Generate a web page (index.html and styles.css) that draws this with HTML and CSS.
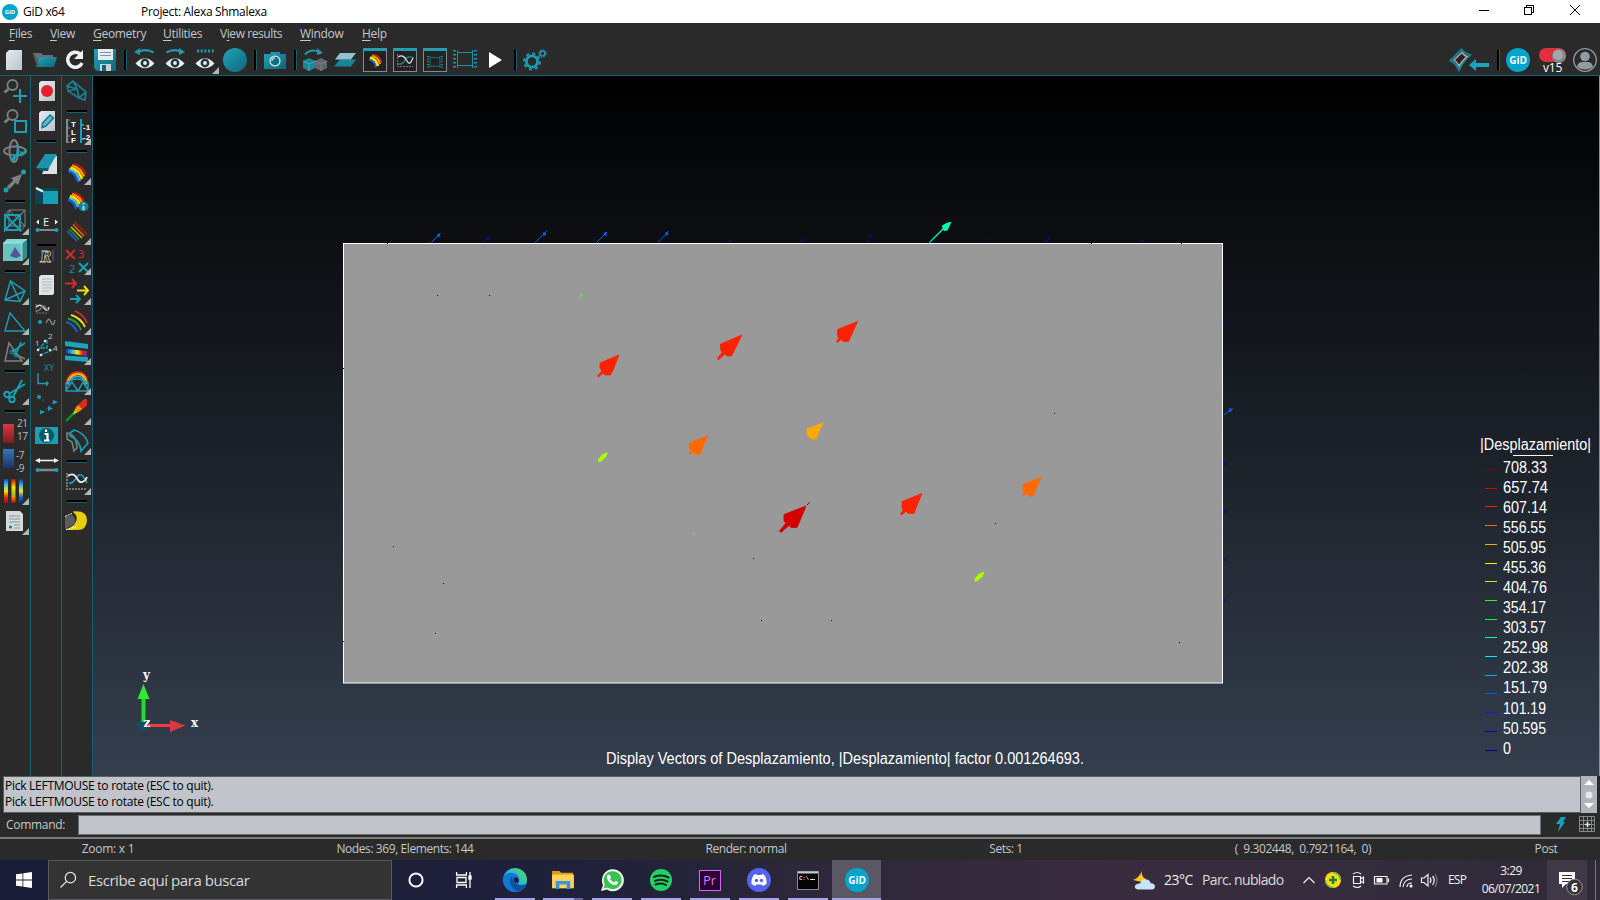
FILE: index.html
```html
<!DOCTYPE html>
<html lang="es">
<head>
<meta charset="utf-8">
<title>GiD x64</title>
<link rel="stylesheet" href="styles.css">
</head>
<body>
<svg class="defs" width="0" height="0">
  <defs>
    <linearGradient id="hr"><stop offset="0" stop-color="#1536c8"/><stop offset="0.3" stop-color="#22c8e8"/><stop offset="0.55" stop-color="#ffe600"/><stop offset="0.8" stop-color="#e01818"/><stop offset="1" stop-color="#6a30d0"/></linearGradient>
    <linearGradient id="vr" x1="0" y1="0" x2="0" y2="1"><stop offset="0" stop-color="#c01010"/><stop offset="0.35" stop-color="#ffe600"/><stop offset="0.55" stop-color="#a0d820"/><stop offset="0.75" stop-color="#ff8a00"/><stop offset="1" stop-color="#b01010"/></linearGradient>
    <linearGradient id="vl" x1="0" y1="0" x2="0" y2="1"><stop offset="0" stop-color="#1848c8"/><stop offset="0.25" stop-color="#40c8e8"/><stop offset="0.5" stop-color="#ffe600"/><stop offset="0.75" stop-color="#e83010"/><stop offset="1" stop-color="#a01010"/></linearGradient>
    <linearGradient id="vb" x1="0" y1="0" x2="0" y2="1"><stop offset="0" stop-color="#1030a0"/><stop offset="0.3" stop-color="#40c8e8"/><stop offset="0.5" stop-color="#ffe600"/><stop offset="0.75" stop-color="#2860d0"/><stop offset="1" stop-color="#102880"/></linearGradient>
    <linearGradient id="tl" x1="0" y1="0" x2="1" y2="1"><stop offset="0" stop-color="#22a5bb"/><stop offset="1" stop-color="#0d6478"/></linearGradient>
    <linearGradient id="pg" x1="0" y1="0" x2="1" y2="1"><stop offset="0" stop-color="#e4ecf0"/><stop offset="1" stop-color="#b9c5cc"/></linearGradient>
    <linearGradient id="rd" x1="0" y1="0" x2="0" y2="1"><stop offset="0" stop-color="#d83a44"/><stop offset="1" stop-color="#7c1c24"/></linearGradient>
    <linearGradient id="bl" x1="0" y1="0" x2="0" y2="1"><stop offset="0" stop-color="#3a74c0"/><stop offset="1" stop-color="#1a3460"/></linearGradient>
    <linearGradient id="eg" x1="0" y1="1" x2="1" y2="0"><stop offset="0" stop-color="#0c6fd0"/><stop offset="0.5" stop-color="#24b4dc"/><stop offset="1" stop-color="#62e05a"/></linearGradient>
    <g id="eye"><path d="M2.500 15.500Q12 5 21.500 15.500Q12 25 2.500 15.500Z" fill="#e8f0f2"/><circle cx="12" cy="15" r="4.400" fill="#20363c"/><circle cx="12" cy="15" r="1.900" fill="#e8f0f2"/></g>
    <g id="frame"><rect x=".5" y=".5" width="23" height="23" fill="#222" stroke="#85898b"/><rect x="0" y="0" width="24" height="3" fill="#279db2"/></g>
    <g id="film"><path d="M5 5.500H19M5 18.500H19M4.500 3V21M19.500 3V21" stroke="#1a94aa" fill="none"/><path d="M1.500 3V22M22.500 3V22" stroke="#1a94aa" stroke-width="3" stroke-dasharray="1.500 2.500" fill="none"/></g>
    <g id="mag"><circle cx="9.500" cy="6" r="5" fill="none" stroke="#7c8182" stroke-width="1.800"/><path d="M5.500 10L1.500 13.500" stroke="#7c8182" stroke-width="2.800"/></g>
  </defs>
</svg>

<header class="titlebar">
  <span class="logo small">GiD</span>
  <span class="app-name">GiD x64</span>
  <span class="project">Project: Alexa Shmalexa</span>
  <svg class="winbtns" viewBox="0 0 120 23" fill="none" stroke="#000" shape-rendering="crispEdges"><path d="M4 10.500H14"/><path d="M49.500 7.500H56.500V14.500H49.500ZM51.500 7V5.500H58.500V12.500H57"/><path d="M95 5L105 15M105 5L95 15" shape-rendering="auto"/></svg>
</header>

<nav class="menubar"><span><u>F</u>iles</span><span><u>V</u>iew</span><span><u>G</u>eometry</span><span><u>U</u>tilities</span><span>V<u>i</u>ew results</span><span><u>W</u>indow</span><span><u>H</u>elp</span></nav>

<div class="toolbar">
  <svg class="ic" viewBox="0 0 24 24"><path d="M6 2H19V22H3V5Z" fill="url(#pg)"/></svg>
  <svg class="ic" viewBox="0 0 24 24"><path d="M0 5H8L10 7H20V10H5L4 17Z" fill="#6a6e70"/><path d="M6 9H24L21 19H3Z" fill="url(#tl)"/><path d="M1 6L5 18" stroke="#55595b" stroke-width="2"/></svg>
  <svg class="ic" viewBox="0 0 24 24"><path d="M17 6A7.500 7.500 0 1 0 19 15" fill="none" stroke="#eef2f3" stroke-width="3.600"/><path d="M20 2V11H11Z" fill="#eef2f3"/></svg>
  <svg class="ic" viewBox="0 0 24 24"><path d="M1 1H23V23H4L1 20Z" fill="url(#tl)"/><rect x="5" y="1" width="15" height="11" fill="#e4ecf0"/><path d="M7 4.500H18M7 7.500H18" stroke="#85959c"/><rect x="7" y="16" width="11" height="7" fill="#c8d2d6"/><rect x="9" y="17" width="4" height="6" fill="#11667a"/></svg>
  <i class="sep"></i>
  <svg class="ic" viewBox="0 0 24 24"><use href="#eye"/><path d="M5 4Q13 0 20.500 4.500" fill="none" stroke="#1b9bb1" stroke-width="2.200"/><path d="M7 0V7L1 4Z" fill="#1b9bb1"/></svg>
  <svg class="ic" viewBox="0 0 24 24"><use href="#eye"/><path d="M3.500 4.500Q11 0 19 4" fill="none" stroke="#1b9bb1" stroke-width="2.200"/><path d="M16 0V7L22 4Z" fill="#1b9bb1"/></svg>
  <span class="ic more"><svg viewBox="0 0 24 24"><use href="#eye"/><path d="M4 3H21" stroke="#1b9bb1" stroke-width="3" stroke-dasharray="2 1.700"/></svg></span>
  <svg class="ic" viewBox="0 0 24 24"><circle cx="12" cy="12" r="12" fill="url(#tl)"/></svg>
  <i class="sep"></i>
  <svg class="ic" viewBox="0 0 24 24"><path d="M1 6H7L8 4H17V6H23V21H1Z" fill="url(#tl)"/><circle cx="12" cy="13" r="5.600" fill="#d5e3e8"/><circle cx="12" cy="13" r="4.300" fill="#176b80"/><path d="M9 13A3 3 0 0 1 12 10" stroke="#a9d6e0" stroke-width="1.500" fill="none"/></svg>
  <i class="sep"></i>
  <svg class="ic" viewBox="0 0 24 24"><path d="M0 13L6 10L12 13V20L6 23L0 20Z" fill="#1c8599"/><path d="M0 13L6 16L12 13M6 16V23" stroke="#3fb0c2" fill="none"/><path d="M12 13L18 10L24 13V20L18 23L12 20Z" fill="#63686a"/><path d="M12 13L18 16L24 13M18 16V23" stroke="#7b8082" fill="none"/><path d="M2 6.500Q8 0 16 4" fill="none" stroke="#1b9bb1" stroke-width="2"/><path d="M14 0L20 5L14 7Z" fill="#1b9bb1"/></svg>
  <svg class="ic" viewBox="0 0 24 24"><path d="M7 11.500H23L18 18.500H1Z" fill="#16869b"/><path d="M7 5H23L18 11.500H2Z" fill="#8fc3cf"/></svg>
  <svg class="ic" viewBox="0 0 24 24"><use href="#frame"/><path d="M6 11.500Q12 12.500 13 19.500" stroke="#1767d8" stroke-width="2" fill="none"/><path d="M7 9.500Q13.500 11 15 18" stroke="#ffe600" stroke-width="2.600" fill="none"/><path d="M9 7.500Q15.500 9.500 17 16" stroke="#ff9a00" stroke-width="2" fill="none"/><path d="M10.500 6.500Q17 8.500 18.500 14.500" stroke="#e02a18" stroke-width="1.500" fill="none"/></svg>
  <svg class="ic" viewBox="0 0 24 24"><use href="#frame"/><path d="M4.500 6V18.500H20" stroke="#777" stroke-dasharray="2 1" fill="none"/><path d="M5 16Q10 17 12 12T21 10" stroke="#188a9e" fill="none" stroke-width="1.300"/><path d="M5 9C9 6 12 9 14 13S18 15 20 10" stroke="#dde" fill="none" stroke-width="1.200"/></svg>
  <svg class="ic" viewBox="0 0 24 24"><use href="#frame"/><use href="#film" transform="translate(4 6) scale(.66)"/></svg>
  <svg class="ic" viewBox="0 0 24 24"><use href="#film" transform="translate(0 -1)"/></svg>
  <svg class="ic" viewBox="0 0 24 24"><path d="M6 4L19 12L6 20Z" fill="#fff"/></svg>
  <i class="sep"></i>
  <svg class="ic" viewBox="0 0 24 24" fill="none" stroke="#1a9cb2"><circle cx="9" cy="13.500" r="5.600" stroke-width="2.800"/><circle cx="9" cy="13.500" r="8" stroke-width="2" stroke-dasharray="3.140 3.140"/><circle cx="19.500" cy="5.500" r="2.500" stroke-width="1.600"/><circle cx="19.500" cy="5.500" r="3.800" stroke-width="1" stroke-dasharray="1.500 1.500"/></svg>
  <div class="toolbar-right">
    <svg class="ic wide" viewBox="0 0 41 24"><path d="M1.500 12.500L12.500 1.500Q15 5 21 7Q14 13 10 22Q7 15 1.500 12.500Z" fill="#2a2a2a" stroke="#148296" stroke-width="2"/><path d="M5 12L13 4.500Q15 7.500 18 8.500Q13 13 10 18Q8 14 5 12Z" fill="#242424" stroke="#b9a9a5" stroke-width="1.500"/><path d="M20 17L27 11V15H40V19H27V23Z" fill="#18a5c0"/></svg>
    <i class="sep"></i>
    <span class="logo">GiD</span>
    <span class="version"><svg viewBox="0 0 28 16"><rect x="0" y="0" width="27" height="14" rx="7" fill="#e22f3c"/><circle cx="20" cy="8" r="7" fill="#7f878b"/><circle cx="19" cy="7" r="5" fill="#a1a9ad"/></svg><b>v15</b></span>
    <svg class="ic user" viewBox="0 0 24 24"><circle cx="12" cy="12" r="11.300" fill="none" stroke="#929ba1" stroke-width="1.300"/><circle cx="12" cy="8.500" r="4.800" fill="#929ba1"/><path d="M4 19Q5 14 9 14H15Q19 14 20 19Q16 21.500 12 21.500T4 19Z" fill="#929ba1"/></svg>
  </div>
</div>

<main class="work">
  <aside class="rail">
    <svg class="ic" viewBox="0 0 24 24"><use href="#mag"/><path d="M17 10V24M10 17H24" stroke="#18a0b6" stroke-width="2"/></svg>
    <svg class="ic" viewBox="0 0 24 24"><use href="#mag"/><rect x="12" y="12" width="11" height="11" fill="none" stroke="#18a0b6" stroke-width="2"/></svg>
    <svg class="ic" viewBox="0 0 24 24" fill="none" stroke-width="1.900"><ellipse cx="11" cy="12" rx="4.500" ry="11" stroke="#7c8182"/><ellipse cx="12" cy="12" rx="11" ry="4.500" stroke="#7c8182"/><path d="M14 6Q16 14 11 21M10 16Q18 17 22 12" stroke="#18a0b6"/><path d="M7 20L12 16V23ZM17 12L23 14L18 18Z" fill="#18a0b6"/></svg>
    <svg class="ic" viewBox="0 0 24 24"><path d="M5 19L15 9" stroke="#7c8182" stroke-width="3.500"/><path d="M19 5L8 9L15 16Z" fill="#7c8182"/><circle cx="3" cy="21" r="2.500" fill="#18a0b6"/><circle cx="20.500" cy="3" r="2.500" fill="#18a0b6"/></svg>
    <i class="hsep"></i>
    <span class="ic more"><svg viewBox="0 0 24 24" fill="none"><path d="M6 1H22V17H6ZM6 1L22 17M22 1L6 17M1 23L6 17M17 23L22 17M1 7L6 1M17 7L22 1" stroke="#7c8182"/><path d="M2 6H17V21H2ZM2 6L17 21M17 6L2 21" stroke="#18a0b6" stroke-width="1.900"/></svg></span>
    <span class="ic more"><svg viewBox="0 0 24 24"><path d="M0 4L4 0H24V18L19 22H0Z" fill="#7fdcd2"/><path d="M0 4H19V22H0Z" fill="#67c4be"/><path d="M19 4L24 0V18L19 22Z" fill="#37888b"/><path d="M12 8L18 17L13 19L7 17Z" fill="#53549a"/><path d="M0 4H19V22M19 4L24 0" stroke="#b8f4ee" fill="none" stroke-width=".7"/></svg></span>
    <i class="hsep"></i>
    <span class="ic more"><svg viewBox="0 0 24 24" fill="none" stroke="#18a0b6" stroke-width="1.500"><path d="M7.500 2L2 21L17 22.500L22 12ZM7.500 2L17 22.500M2 21L22 12"/></svg></span>
    <span class="ic more"><svg viewBox="0 0 24 24" fill="none" stroke="#18a0b6" stroke-width="1.400"><path d="M7 4L2 22H22Z"/></svg></span>
    <span class="ic more"><svg viewBox="0 0 24 24" fill="none"><path d="M6 4L2 22H19ZM12 15L22 20" stroke="#7c8182" stroke-width="1.500"/><path d="M9 13L22 4M13 15L18 3" stroke="#18a0b6" stroke-width="1.600"/><circle cx="9" cy="13" r="2" stroke="#18a0b6"/><circle cx="13" cy="16" r="2" stroke="#18a0b6"/></svg></span>
    <i class="hsep"></i>
    <span class="ic more"><svg viewBox="0 0 24 24" fill="none" stroke="#18a0b6" stroke-width="1.900"><path d="M6 15L22 5M10 18L19 1"/><circle cx="4" cy="15.500" r="2.700"/><circle cx="9" cy="20.500" r="2.700"/></svg></span>
    <i class="hsep"></i>
    <svg class="ic" viewBox="0 0 24 24"><rect x="0" y="5" width="11" height="19" fill="url(#rd)"/><text class="num" x="14" y="8">21</text><text class="num" x="14" y="21">17</text></svg>
    <svg class="ic" viewBox="0 0 24 24"><rect x="0" y="0" width="11" height="19" fill="url(#bl)"/><text class="num" x="13" y="10">-7</text><text class="num" x="13" y="23">-9</text></svg>
    <span class="ic more"><svg viewBox="0 0 24 24"><rect x="1" y="0" width="4" height="24" fill="url(#vl)"/><rect x="8.500" y="0" width="4" height="24" fill="url(#vr)"/><rect x="16" y="0" width="4" height="24" fill="url(#vb)"/></svg></span>
    <span class="ic more"><svg viewBox="0 0 24 24"><path d="M3 2H17L20 5V22H3Z" fill="#d3dadd"/><path d="M6 7H17M6 10H17M6 13H17M11 16H17M11 19H17" stroke="#8a9498"/><circle cx="7.500" cy="18" r="1.600" fill="#0b7c92"/></svg></span>
  </aside>
  <aside class="rail mid">
    <svg class="ic" viewBox="0 0 24 24"><path d="M6 2H20V22H4V4Z" fill="url(#pg)"/><circle cx="12" cy="12" r="6" fill="#e2202f"/></svg>
    <svg class="ic" viewBox="0 0 24 24"><path d="M6 2H20V22H4V4Z" fill="url(#pg)"/><path d="M7.500 14L15 6L18.500 9L11 17L7 18.500Z" fill="#5fb8d0" stroke="#14798c" stroke-width="1.500"/></svg>
    <i class="hsep"></i>
    <svg class="ic book" viewBox="0 0 24 24"><path d="M15 4H22V22H7Z" fill="#d9e1e4"/><path d="M10 2H22L14 16H1Z" fill="#1b94a9"/><path d="M14 16H1L7 19H13Z" fill="#0e5d6d"/></svg>
    <svg class="ic" viewBox="0 0 24 24"><path d="M0 6L9 10V22H0Z" fill="#0c4650"/><path d="M8 9H23V22H8Z" fill="#15a0b7"/><path d="M0 6H23V9H8Z" fill="#0c4650"/><path d="M1 6L8 9.500" stroke="#f1f6f7" stroke-width="2.200"/></svg>
    <svg class="ic" viewBox="0 0 24 24"><path d="M4 7.500V12.500L1 10ZM20 7.500V12.500L23 10Z" fill="#eef2f3"/><text x="8" y="14" class="lt">E</text><path d="M2 18H22" stroke="#84898b" stroke-width="2"/><circle cx="2.500" cy="18" r="2" fill="#18a0b6"/><circle cx="21.500" cy="18" r="2" fill="#18a0b6"/></svg>
    <i class="hsep dark"></i>
    <svg class="ic renum" viewBox="0 0 24 20"><text x="5" y="15" class="rr">R</text><path d="M7 3V14M18 3V14" stroke="#3b6c9c"/></svg>
    <svg class="ic" viewBox="0 0 24 24"><path d="M6 2H19V21L17 22H4V4Z" fill="#dfe5e7"/><path d="M7 6H17M7 9H17M7 12H17M7 15H17M7 18H14" stroke="#aeb6ba"/></svg>
    <svg class="ic" viewBox="0 0 24 24" fill="none"><path d="M1 1V10H13" stroke="#777" stroke-dasharray="2 1"/><path d="M1 4Q5 0 9 5T14 4" stroke="#cfd5d8" stroke-width="1.500"/><path d="M1 8Q5 8 7 4T13 8" stroke="#777" stroke-width="1.500"/><circle cx="5" cy="19" r="2" fill="#18a0b6"/><path d="M11 20Q14 13 16 19T20 17" stroke="#7c8182" stroke-width="1.500"/></svg>
    <svg class="ic" viewBox="0 0 24 24"><path d="M5 22L18 17M3 17L12 7M12 7V15H5" stroke="#18a0b6" stroke-width="1.300" stroke-dasharray="4 1" fill="none"/><text class="tn" x="13" y="6">2</text><text class="tn" x="0" y="13">1</text><text class="tn" x="18" y="18">4</text><g fill="#dde3e5"><circle cx="3" cy="17" r="1.300"/><circle cx="10" cy="8" r="1.300"/><circle cx="15" cy="17" r="1.300"/><circle cx="6" cy="22" r="1.300"/></g></svg>
    <svg class="ic" viewBox="0 0 24 24"><path d="M3 10V20.500H11" fill="none" stroke="#18a0b6" stroke-width="1.400"/><path d="M11 17.500L14 20.500L11 23.500Z" fill="#18a0b6"/><text class="xy" x="9" y="8">XY</text></svg>
    <svg class="ic" viewBox="0 0 24 24" fill="#18a0b6"><circle cx="4" cy="4" r="2"/><path d="M4 4L9 8M8 19L18 9" stroke="#15798a" stroke-dasharray="2 2"/><path d="M5 17L10 19L5 21.500ZM13 13L18 15.500L13 18ZM18 7L23 9L18 11.500Z"/></svg>
    <svg class="ic" viewBox="0 0 24 24"><rect x="0" y="4" width="23" height="17" fill="#19a0b5"/><circle cx="11.500" cy="12.500" r="7.500" fill="#0c5565"/><path d="M9.500 11H12.500V17M9 17.500H14.500M11 6.500V9" stroke="#fff" stroke-width="2.200" fill="none"/></svg>
    <svg class="ic" viewBox="0 0 24 24"><path d="M3 7.500H21" stroke="#eef2f3" stroke-width="1.600"/><path d="M5 5V10L0 7.500ZM19 5V10L24 7.500Z" fill="#eef2f3"/><path d="M2 17H22" stroke="#84898b" stroke-width="2.500"/><circle cx="2.500" cy="17" r="2" fill="#18a0b6"/><circle cx="21.500" cy="17" r="2" fill="#18a0b6"/></svg>
  </aside>
  <aside class="rail">
    <svg class="ic" viewBox="0 0 24 24" fill="none" stroke="#167f92" stroke-width="1.700"><path d="M2 7L8 2L21 13L20 21L14 19L3 12ZM2 7L12 10L8 2M12 10L3 12M12 10L14 19L21 13"/></svg>
    <i class="hsep"></i>
    <span class="ic more"><svg viewBox="0 0 24 24"><path d="M2 0V24" stroke="#84898b" stroke-width="2"/><path d="M3 1H5M3 9H5M3 17H5M3 23H5" stroke="#84898b"/><path d="M16 0V24M16 6H19M16 20H19" stroke="#18a0b6" stroke-width="2"/><text class="tlf" x="6" y="8">T</text><text class="tlf" x="6" y="16">L</text><text class="tlf" x="6" y="24">F</text><text class="tlf" x="18" y="11">-1</text><text class="tlf" x="18" y="21">-2</text></svg></span>
    <i class="hsep"></i>
    <span class="ic more"><svg viewBox="0 0 24 24" fill="none" stroke-width="2.200"><path d="M3 12Q10 13 13 23" stroke="#1a5be0"/><path d="M4 10Q12 12 15 22" stroke="#48c4e8"/><path d="M5.500 8.500Q14 11 17 20" stroke="#ffe600" stroke-width="2.600"/><path d="M7 6.500Q16 9 19 17.500" stroke="#ff9000" stroke-width="2.600"/><path d="M9 4.500Q18 7 21 15" stroke="#c01818" stroke-width="1.800"/></svg></span>
    <svg class="ic" viewBox="0 0 24 24" fill="none" stroke-width="2.200"><path d="M3 11Q9 12 11 20" stroke="#1a5be0"/><path d="M4 9Q11 10.500 13 18" stroke="#48c4e8"/><path d="M5 7Q13 9 15 16" stroke="#ffe600" stroke-width="2.600"/><path d="M7 5Q15 7.500 17 14" stroke="#ff9000" stroke-width="2.600"/><path d="M9 3.500Q16 5.500 19 12" stroke="#c01818" stroke-width="1.800"/><circle cx="18.500" cy="17.500" r="5" fill="#188298" stroke="none"/><path d="M18.500 17V21M18.500 14V15.500" stroke="#a8dde6" stroke-width="2"/></svg>
    <span class="ic more"><svg viewBox="0 0 24 24" fill="none" stroke-width="1.700"><path d="M2 12L12 22" stroke="#1a5be0"/><path d="M4 10L14 20.500" stroke="#208a38"/><path d="M6 8L17 19" stroke="#c8b800"/><path d="M8 5.500L19 17" stroke="#d07000"/><path d="M9.500 3L22 15.500" stroke="#b01818"/></svg></span>
    <span class="ic more"><svg viewBox="0 0 24 24" fill="none" stroke-width="2"><path d="M1 1L10 10M10 1L1 10" stroke="#d42a33"/><path d="M14 14L23 23M23 14L14 23" stroke="#18a0b6"/><text class="x3" x="13" y="9">3</text><text class="x2" x="4" y="24">2</text></svg></span>
    <span class="ic more"><svg viewBox="0 0 24 24" fill="none" stroke-width="1.900"><path d="M0 4.500H11M7 0L11 4.500L7 9" stroke="#d42a33"/><path d="M12 11.500H23M19 7L23 11.500L19 16" stroke="#f0e000"/><path d="M5 20H15M11 16L15 20L11 24" stroke="#18a0b6"/></svg></span>
    <span class="ic more"><svg viewBox="0 0 24 24" fill="none" stroke-width="1.900"><path d="M1 13Q9 15 12 23" stroke="#1a5be0"/><path d="M3 9.500Q13 12 16 21" stroke="#28a040"/><path d="M6 6Q16 9 20 18" stroke="#f0e000"/><path d="M10 2Q19 6 22 14" stroke="#d42a33"/></svg></span>
    <span class="ic more"><svg viewBox="0 0 24 24"><path d="M0 2L23 5V10L0 7Z" fill="#1ba4bc"/><path d="M1 10L22 12V17L1 14Z" fill="url(#hr)"/><path d="M0 16.500L23 18V23L0 21Z" fill="#1ba4bc"/></svg></span>
    <span class="ic more"><svg viewBox="0 0 24 24" fill="none"><path d="M1.500 14Q3 3.500 12 3T22.500 14" stroke="#d02020" stroke-width="2"/><path d="M2.500 15Q4 6 12 5T21.500 15" stroke="#ffb000" stroke-width="2.500"/><path d="M3 16Q5 8 12 7.500T21 16" stroke="#30b0e8" stroke-width="1.500"/><path d="M1 22V14Q12 6 23 14V22ZM1 21L7 13L13 22L18 13L23 21" stroke="#18a0b6" stroke-width="1.500"/></svg></span>
    <span class="ic more"><svg viewBox="0 0 24 24"><path d="M1 22L10 13" stroke="#108a18" stroke-width="2.500"/><path d="M8 15L11 8L20 0L22 1V6L15 12Z" fill="#ff9000"/><path d="M13 6L20 0L22 1V6L17 10Z" fill="#e02a18"/><path d="M10 11L13 13L8 16Z" fill="#98d838"/></svg></span>
    <span class="ic more"><svg viewBox="0 0 24 24" fill="none" stroke-width="1.600"><path d="M2 4Q11 5 12 19L9 22L7 13L2 10Z" stroke="#7c8182"/><path d="M5 4L9 1Q20 4 23 14L16 22Q15 11 5 7Z" stroke="#18a0b6"/></svg></span>
    <i class="hsep"></i>
    <span class="ic more"><svg viewBox="0 0 24 24" fill="none"><path d="M2 4V20H22" stroke="#777" stroke-width="2" stroke-dasharray="2 1"/><path d="M4 14Q8 15 12 8T22 14" stroke="#18a0b6" stroke-width="1.700"/><path d="M3 7C8 3 11 7 13 11S20 13 22 8" stroke="#eef2f3" stroke-width="1.700"/></svg></span>
    <i class="hsep"></i>
    <svg class="ic" viewBox="0 0 24 24"><path d="M8 2.500Q22 1 22 11T12 21H1L9 16Q15 8 8 3Z" fill="#e8cc10"/><path d="M7 6Q13 11 8 16L0 20V8Z" fill="#5a5d60"/><path d="M0 7.500L7 4.500M1 20.500L11 18" stroke="#fff" stroke-dasharray="2 1"/></svg>
  </aside>

  <section class="viewport">
    <svg class="scene" viewBox="93 76 1506 700" width="1506" height="700">
      <rect x="343.500" y="243.500" width="879" height="439.500" fill="#999" stroke="#fff"/>
      <g fill="#ff2200" stroke="#ff2200" stroke-width=".8">
        <path d="M619 355L600 363V368L602 371L597.500 376L598.500 377L603 373L605 375H610.500L613 370Z"/>
        <path d="M742 335L720.500 344V349L722 352.500L717.500 358L718.500 360L725 354L727 356H731.500L734 351Z"/>
        <path d="M857.500 321.500L837.500 329.500V335L838.500 338.500L836.500 341.500L837.500 342.500L841 339.500L843 341.500H848.500L851 336Z"/>
        <path d="M922 493.500L902 501.500V507L903 510.500L900.500 513.500L901.500 515L906 511.500L909 513.500H914L916 508Z"/>
      </g>
      <path d="M806 506L784 514.500V521L786 523L779.500 531L781 532.500L789 525.500L791 527.500H797L799 523Z" fill="#d40000" stroke="#d40000" stroke-width=".8"/><path d="M807 505L809.500 502.500" stroke="#800000"/>
      <g fill="#ff6a00" stroke="#ff6a00" stroke-width=".6"><path id="oa" d="M708 435.500L689.500 443L689 447L690.500 450.500L689 454L690 455L693 452L696 454.500H700L702 449Z"/><use href="#oa" x="333.500" y="41.500"/></g>
      <path d="M824 422L806.500 429V434L810 438.500L813 439.500L817 439L819 432Z" fill="#ffaa00"/>
      <path id="yg" d="M608 452L602 454.500L598 459.500V462L601 461.500L606 457Z" fill="#aaff00"/><use href="#yg" x="376.500" y="119.500"/>
      <path d="M582 294L580 297M694 533V535" stroke="#4aff2a" stroke-width="1.500"/>
      <path d="M930 242L945 227" stroke="#00ffaa" stroke-width="1.300"/><path d="M951.500 222L947.500 222.500L942 225.500L942.500 228.500L944 231L947.500 230.500Z" fill="#00ffaa"/>
      <path d="M929 243L933 239" stroke="#00aaff"/>
      <g stroke="#0060ff" fill="none" stroke-width="1">
        <path d="M431.500 242.500L440.500 233M535 242.500L547 231M596.500 242.500L607 232M658 242.500L669 231M1224 415L1233 408"/>
        <path d="M437.500 235.500L440 235M543 234L546 234M604 234.500L606.500 233.500M665.500 234L668 233.500M1229 410.500L1231.500 409.500" stroke-width="3"/>
      </g>
      <g stroke="#0018ff" fill="none"><path d="M484 242L490 236M487 238L489 240M729 242L731 240M801 242L803 240M802 238V236M866 242L868 240M870 238L871 235M989 239V241M1044 242L1047 240M1048 239L1050 236M1141 242L1143 240M1225 322V326M1225 461V465M1225 509V513M1225 558V561M1225 599V602" stroke="#0000d0"/></g>
      <g fill="#00008a"><path d="M437 295h1v1h-1zM489 295h1v1h-1zM393 546h1v1h-1zM443 583h1v1h-1zM753 558h1v1h-1zM1054 413h1v1h-1zM995 523h1v1h-1zM1179 642h1v1h-1zM343 368h1v1h-1zM387 243h1v1h-1zM1091 243h1v1h-1zM1181 243h1v1h-1z"/></g>
      <path d="M435 633h1v1h-1zM761 620h1v1h-1zM831 620h1v1h-1zM343 641h1v1h-1z" fill="#0018ff"/>

      <circle cx="142.500" cy="725.500" r="5.500" fill="#174b62"/>
      <rect x="141.500" y="698" width="4" height="24" fill="#28d82c"/><path d="M143.500 684L149.500 699H137.500Z" fill="#30e834"/>
      <rect x="148" y="724" width="23" height="3" fill="#f03c3c"/><path d="M185.500 725.500L170 720V732Z" fill="#d83a3c"/>
      <g class="axis"><text x="143" y="679">y</text><text x="191" y="726.500">x</text><text x="143.500" y="726.500">z</text></g>

      <g class="gl">
        <text x="606" y="764" textLength="478" lengthAdjust="spacingAndGlyphs">Display Vectors of Desplazamiento, |Desplazamiento| factor 0.001264693.</text>
        <text x="1480" y="450" textLength="111" lengthAdjust="spacingAndGlyphs">|Desplazamiento|</text>
        <text x="1503" y="473" textLength="44" lengthAdjust="spacingAndGlyphs">708.33</text>
        <text x="1503" y="493" textLength="45" lengthAdjust="spacingAndGlyphs">657.74</text>
        <text x="1503" y="513" textLength="44" lengthAdjust="spacingAndGlyphs">607.14</text>
        <text x="1503" y="533" textLength="43" lengthAdjust="spacingAndGlyphs">556.55</text>
        <text x="1503" y="553" textLength="43" lengthAdjust="spacingAndGlyphs">505.95</text>
        <text x="1503" y="573" textLength="43" lengthAdjust="spacingAndGlyphs">455.36</text>
        <text x="1503" y="593" textLength="44" lengthAdjust="spacingAndGlyphs">404.76</text>
        <text x="1503" y="613" textLength="43" lengthAdjust="spacingAndGlyphs">354.17</text>
        <text x="1503" y="633" textLength="43" lengthAdjust="spacingAndGlyphs">303.57</text>
        <text x="1503" y="653" textLength="45" lengthAdjust="spacingAndGlyphs">252.98</text>
        <text x="1503" y="673" textLength="45" lengthAdjust="spacingAndGlyphs">202.38</text>
        <text x="1503" y="693" textLength="44" lengthAdjust="spacingAndGlyphs">151.79</text>
        <text x="1503" y="714" textLength="43" lengthAdjust="spacingAndGlyphs">101.19</text>
        <text x="1503" y="734" textLength="43" lengthAdjust="spacingAndGlyphs">50.595</text>
        <text x="1503" y="754" textLength="8" lengthAdjust="spacingAndGlyphs">0</text>
      </g>
      <path d="M1513 455.500H1553" stroke="#fff"/>
      <path d="M1485 469.500h12" stroke="#780000"/><path d="M1485 488.500h12" stroke="#d40000"/><path d="M1485 506.500h12" stroke="#ff2200"/><path d="M1485 525.500h12" stroke="#ff6a00"/>
      <path d="M1485 544.500h12" stroke="#ffaa00"/><path d="M1485 563.500h12" stroke="#ffea00"/><path d="M1485 581.500h12" stroke="#aaff00"/><path d="M1485 600.500h12" stroke="#2aff00"/>
      <path d="M1485 619.500h12" stroke="#00ff40"/><path d="M1485 637.500h12" stroke="#00ffaa"/><path d="M1485 656.500h12" stroke="#00eaff"/><path d="M1485 675.500h12" stroke="#00aaff"/>
      <path d="M1485 693.500h12" stroke="#0060ff"/><path d="M1485 712.500h12" stroke="#0018ff"/><path d="M1485 731.500h12" stroke="#0000c8"/><path d="M1485 750.500h12" stroke="#000088"/>
    </svg>
  </section>
</main>

<section class="console">
  <div class="log"><p>Pick LEFTMOUSE to rotate (ESC to quit).</p><p>Pick LEFTMOUSE to rotate (ESC to quit).</p></div>
  <svg class="scroll" viewBox="0 0 16 37"><path d="M8 4L13 9H3ZM8 32L13 27H3Z" fill="#fff"/><circle cx="8" cy="19" r="3.500" fill="#e4e7ec"/></svg>
</section>
<section class="command">
  <label>Command:</label><div class="field"></div>
  <svg class="cmdicons" viewBox="0 0 59 22"><path d="M20 2H25L22 7H24L17 17L19 9H15Z" fill="#18a0b6"/><path d="M38.500 1.500H53.500V16.500H38.500ZM42.500 1V17M46.500 1V17M50.500 1V17M38 5.500H54M38 9.500H54M38 13.500H54" fill="none" stroke="#858989"/><path d="M44 9.500H49M46.500 7V12" stroke="#ddd" stroke-width="1.500"/></svg>
</section>
<footer class="status"><span>Zoom: x 1</span><span>Nodes: 369, Elements: 144</span><span>Render: normal</span><span>Sets: 1</span><span class="pre">(  9.302448,  0.7921164,  0)</span><span>Post</span></footer>

<footer class="taskbar">
  <div class="start"><svg viewBox="0 0 16 16" width="16" height="16" fill="#fff"><path d="M0 2.300L6.500 1.400V7.600H0ZM7.300 1.300L16 0V7.600H7.300ZM0 8.400H6.500V14.600L0 13.700ZM7.300 8.400H16V16L7.300 14.700Z"/></svg></div>
  <div class="search"><svg viewBox="0 0 18 18" width="17" height="18" fill="none" stroke="#e8e8e8" stroke-width="1.300"><circle cx="11" cy="6.500" r="5.500"/><path d="M7 10.500L.5 17"/></svg><span>Escribe aquí para buscar</span></div>
  <div class="tb plain"><svg viewBox="0 0 16 16" width="16" height="16"><circle cx="8" cy="8" r="6.600" fill="none" stroke="#fff" stroke-width="2"/></svg></div>
  <div class="tb plain"><svg viewBox="0 0 16 16" width="16" height="16" fill="none" stroke="#fff" stroke-width="1.300"><path d="M.6 0V3H10.400V0M1 5.500H10V10.500H1ZM.6 16V13H10.400V16M14 0V16"/><rect x="13" y="4" width="2" height="3" fill="#fff"/></svg></div>
  <div class="tb run first"><svg viewBox="0 0 24 24" width="24" height="24"><circle cx="12" cy="12" r="12" fill="url(#eg)"/><path d="M0 12C1 6 6 4 10 5Q16 6 16 12Q16 14 14 15Q17 18 23 16Q19 24 12 24Q2 23 0 12Z" fill="#0b7ad8"/><path d="M9 8Q5 13 9 19T18 22Q22 20 23 16Q18 19 13 16Q9 12 9 8Z" fill="#0d4f9e"/><path d="M11 10Q15 8 16 12Q16 14 14.500 15.500Q10 14 11 10Z" fill="#1c2138"/></svg></div>
  <div class="tb run split"><svg viewBox="0 0 24 22" width="22" height="20"><path d="M0 1H8L10 3H23V20H0Z" fill="#e39b13"/><path d="M0 5H24V20H0Z" fill="#ffd25c"/><path d="M4 21V12H20V21H16V16H8V21Z" fill="#3a95dc"/></svg></div>
  <div class="tb run"><svg viewBox="0 0 22 22" width="22" height="22"><path d="M0 22L2 16A11 11 0 1 1 6 20.500Z" fill="#f1f5f1"/><path d="M2.500 19.500L3.800 15.500A9 9 0 1 1 6.500 18.500Z" fill="#38c351"/><path d="M7 5.500L9 6L10 8.500L9 10Q10.500 12.500 13 13.500L14.500 12L17 13Q17 16 14 16Q8 15.500 6 9Q5.500 7 7 5.500Z" fill="#fff"/></svg></div>
  <div class="tb run"><svg viewBox="0 0 22 22" width="22" height="22"><circle cx="11" cy="11" r="11" fill="#20d362"/><path d="M4 8Q12 5 18.500 8.500M5 12Q12 9.500 17.500 12.500M5.500 15.500Q12 13.500 16 16" stroke="#16231b" stroke-width="2" fill="none" stroke-linecap="round"/></svg></div>
  <div class="tb run"><span class="pr">Pr</span></div>
  <div class="tb run"><svg viewBox="0 0 24 24" width="24" height="24"><circle cx="12" cy="12" r="12" fill="#5662f0"/><path d="M8 6L10.500 7H13.500L16 6Q20 9 19.500 16L16 18L14.500 16.500H9.500L8 18L4.500 16Q4 9 8 6Z" fill="#fff"/><circle cx="9.500" cy="12.500" r="1.700" fill="#5662f0"/><circle cx="14.500" cy="12.500" r="1.700" fill="#5662f0"/></svg></div>
  <div class="tb run"><svg viewBox="0 0 22 19" width="22" height="19"><rect x=".5" y=".5" width="21" height="18" fill="#050505" stroke="#8b8b8b"/><path d="M1 1.500H21" stroke="#c5c8cc" stroke-width="2"/><text x="2" y="9" class="cmdt">C:\</text><path d="M13 8.500H18" stroke="#ddd"/></svg></div>
  <div class="tb run active"><span class="logo">GiD</span></div>
  <div class="tray">
    <svg class="weather" viewBox="0 0 22 19" width="22" height="19"><path d="M9 0Q8 6 13 8L9 11L0 9Q6 7 9 0Z" fill="#fbc718"/><path d="M5 18.500Q1 18 2 14.500Q4 12 7 12.500Q9 7 14 8.500Q17 9 17.500 12Q22 12.500 22 15.500Q21.500 18.500 19 18.500Z" fill="#c9e3f8"/></svg>
    <span class="temp">23°C</span><span class="sky">Parc. nublado</span>
    <svg class="glyphs" viewBox="0 0 140 24" fill="none" stroke="#f1f1f1" stroke-width="1.200"><path d="M3.500 15L9 9.500L14.500 15"/><circle cx="33" cy="12" r="8" fill="#f5dc1c" stroke="none"/><path d="M33 4.500A7.500 7.500 0 0 1 40.500 12M33 19.500A7.500 7.500 0 0 1 25.500 12" stroke="#68b83a" stroke-width="1.500"/><path d="M33 8V16M29 12H37" stroke="#287a28" stroke-width="2.500"/><path d="M53.500 8.500H60.500V15.500H53.500ZM60.500 11L63.500 9V15L60.500 13M53 6Q57.500 3 61 6M53 18Q57.500 21 61 18"/><path d="M74.500 8.500H87V16H74.500ZM88.500 10.500V14"/><rect x="76.500" y="10" width="6" height="4.500" fill="#fff" stroke="none"/><path d="M100 19Q100 8 112 7M103 19Q104 11 112 11M107 19Q107 15 112 15"/><circle cx="111" cy="18" r="1.500" fill="#fff" stroke="none"/><path d="M121.500 10V14.500H124L128 18V6.500L124 10ZM130 9.500Q132 12 130 15M132.500 8Q136 12 132.500 17"/><path d="M135 6Q139 12 135 19" stroke="#77727c"/></svg>
    <span class="lang">ESP</span>
    <div class="clock"><span>3:29</span><span>06/07/2021</span></div>
    <div class="notif"><svg viewBox="0 0 40 40" width="40" height="40"><path d="M12 12H28V24H19L15 28V24H12Z" fill="#fff"/><path d="M15 15.500H25M15 18.500H25M15 21.500H22" stroke="#35303f"/><circle cx="27.500" cy="27" r="7.800" fill="#33313a" stroke="#929096"/><text x="24" y="31.500" class="cnt">6</text></svg></div>
    <i class="peek"></i>
  </div>
</footer>
</body>
</html>
```
FILE: styles.css
```css
* { box-sizing: border-box; }
body {
  margin: 0;
  width: 1600px;
  height: 900px;
  overflow: hidden;
  background: #2a2a2a;
  font: 12px/16px "Open Sans", "Noto Sans", sans-serif;
  letter-spacing: -0.3px;
  display: flex;
  flex-direction: column;
}
p { margin: 0; }
svg { display: block; overflow: visible; flex: none; }
.defs { position: absolute; }

.titlebar { height: 23px; background: #fff; color: #000; display: flex; align-items: center; padding-left: 2px; flex: none; }
.app-name { width: 123px; padding-left: 5px; }
.project { letter-spacing: -0.32px; }
.winbtns { width: 120px; height: 23px; margin-left: auto; margin-right: 5px; }
.logo {
  width: 24px; height: 24px; border-radius: 50%; background: #02a5cc; color: #fff;
  font: bold 10px/24px "Open Sans", sans-serif; text-align: center; letter-spacing: 0; flex: none;
}
.logo.small { width: 16px; height: 16px; font-size: 6px; line-height: 16px; }

.menubar { height: 22px; padding: 3px 0 0 9px; display: flex; gap: 18px; color: #c3c8cc; flex: none; white-space: nowrap; }
.menubar span { width: 25px; }
.menubar span:nth-child(1) { width: 23px; }
.menubar span:nth-child(3) { width: 52px; }
.menubar span:nth-child(4) { width: 39px; }
.menubar span:nth-child(5) { width: 62px; letter-spacing: -0.42px; }
.menubar span:nth-child(6) { width: 44px; }
.menubar u { text-underline-offset: 2px; }

.toolbar { height: 31px; padding: 3px; display: flex; gap: 6px; border-bottom: 1px solid #136070; flex: none; }
.ic { width: 24px; height: 24px; flex: none; display: block; }
.ic.wide { width: 41px; }
.sep { width: 4px; height: 20px; margin-top: 2px; padding-left: 1px; flex: none; }
.sep::before { content: ""; display: block; width: 2px; height: 20px; background: #000; border-right: 1px solid #136070; }
.more { position: relative; }
.more > svg { width: 24px; height: 24px; }
.more::after {
  content: ""; position: absolute; right: -2px; bottom: -2px;
  border-style: solid; border-width: 0 0 7px 7px; border-color: transparent transparent #b4b7b8 transparent;
}
.toolbar-right { margin-left: auto; display: flex; gap: 6px; }
.version { width: 28px; height: 27px; margin-left: 3px; position: relative; }
.version svg { width: 28px; height: 16px; }
.version b { position: absolute; left: 4px; top: 12px; font-size: 12px; font-weight: normal; color: #fff; letter-spacing: -0.2px; }

.work { display: flex; height: 700px; flex: none; }
.rail { width: 31px; padding: 3px 3px 0; border-right: 1px solid #136070; display: flex; flex-direction: column; gap: 6px; flex: none; }
.rail.mid { padding-left: 4px; }
.hsep { height: 4px; padding-top: 1px; margin: 0 2px; flex: none; }
.hsep::before { content: ""; display: block; height: 2px; background: #000; border-bottom: 1px solid #136070; }
.hsep.dark::before { border-color: #000; height: 1px; }
.book { margin-top: 3px; }
.hsep.dark { margin-top: 1px; margin-bottom: -6px; }
.ic.renum { height: 20px; }
.num { font: 10px "Open Sans", sans-serif; fill: #b9bcbe; letter-spacing: -0.5px; }
.lt { font: 11px "Open Sans", sans-serif; fill: #eef2f3; }
.rr { font: italic bold 17px "Liberation Serif", serif; fill: #0a0a0a; stroke: #d8c8b0; stroke-width: .8; }
.tn { font: 8px "Open Sans", sans-serif; fill: #c6cbcd; }
.xy { font: 9px "Open Sans", sans-serif; fill: #18909f; letter-spacing: 0; }
.tlf { font: bold 8px "Liberation Sans", sans-serif; fill: #fff; letter-spacing: 0; }
.x3, .x2 { font: 11px "Open Sans", sans-serif; fill: #d42a33; stroke: none; }
.x2 { fill: #18909f; }

.viewport { width: 1507px; border-right: 1px solid #8b8e92; background: linear-gradient(#000, #343e4d); }
.gl { font: 16px "Liberation Sans", sans-serif; fill: #fff; letter-spacing: 0; }
.axis { font: bold 12px "DejaVu Serif", serif; fill: #fff; }

.console { height: 37px; padding-left: 3px; display: flex; flex: none; }
.log { width: 1578px; border: 1px solid #5b5d60; background: #c1c4ca; color: #000; padding: 1px 1px 0; letter-spacing: -0.27px; }
.log p { line-height: 16px; }
.scroll { width: 16px; height: 37px; background: #b1b4bb; }
.command { height: 24px; display: flex; padding-top: 2px; color: #c3c8cc; flex: none; }
.command label { width: 78px; padding: 2px 0 0 6px; }
.field { width: 1463px; height: 20px; background: #c1c4ca; border: 1px solid #6b6d70; }
.cmdicons { width: 59px; height: 22px; }
.status { height: 23px; border-top: 2px solid #7b7b7b; display: flex; color: #c3c8cc; text-align: center; padding-top: 2px; flex: none; letter-spacing: -0.42px; }
.status span { width: 378px; }
.status span:nth-child(1), .status span:nth-child(4) { width: 216px; }
.status span:nth-child(1) { letter-spacing: -0.25px; }
.status span:nth-child(3) { width: 304px; }
.status span:nth-child(6) { width: 108px; }
.pre { white-space: pre; }

.taskbar { height: 40px; display: flex; flex: none; color: #f1f1f1; background: linear-gradient(90deg, #1a1d38, #20213a 38%, #2c2739 50%, #382c3e 68%, #362c3e 82%, #2e2a38); }
.start { width: 48px; display: flex; align-items: center; justify-content: center; }
.search { width: 344px; border: 1px solid #5c5c5e; background: #333; display: flex; align-items: center; padding-left: 11px; font-size: 15px; color: #d9d9d9; letter-spacing: -0.42px; }
.search span { margin-left: 11px; }
.tb { width: 49px; display: flex; align-items: center; justify-content: center; position: relative; flex: none; }
.tb.plain { width: 48px; }
.tb.first { margin-left: 2px; }
.run::after { content: ""; position: absolute; left: 5px; bottom: 0; width: 40px; height: 2px; background: #a9a3ec; }
.first + .split { margin-left: -1px; }
.split::after { background: linear-gradient(90deg, #a9a3ec 31px, #6a6798 31px); }
.active { background: #5c5765; }
.active::after { left: 0; width: 49px; }
.active .logo { margin-left: 1px; }
.pr { width: 22px; height: 21px; border: 1px solid #dc62f0; background: #2b0035; color: #dc7af5; font-size: 13px; line-height: 18px; text-align: center; letter-spacing: 0; }
.cmdt { font: bold 6px "Liberation Mono", monospace; fill: #ddd; }
.tray { margin-left: auto; display: flex; align-items: center; height: 40px; white-space: nowrap; }
.temp { width: 38px; margin-left: 9px; font-size: 14px; letter-spacing: -0.5px; }
.sky { width: 93px; font-size: 14px; letter-spacing: -0.65px; color: #dcdadd; }
.glyphs { width: 140px; height: 24px; margin-left: 5px; }
.lang { width: 24px; margin-left: 8px; letter-spacing: -0.8px; }
.clock { width: 72px; margin-left: 3px; display: flex; flex-direction: column; text-align: center; gap: 2px; letter-spacing: -0.5px; }
.notif { width: 40px; height: 40px; background: #403846; }
.cnt { font: bold 12px "Open Sans", sans-serif; fill: #fff; }
.peek { width: 1px; height: 40px; background: #79757e; margin: 0 4px 0 8px; }
```
